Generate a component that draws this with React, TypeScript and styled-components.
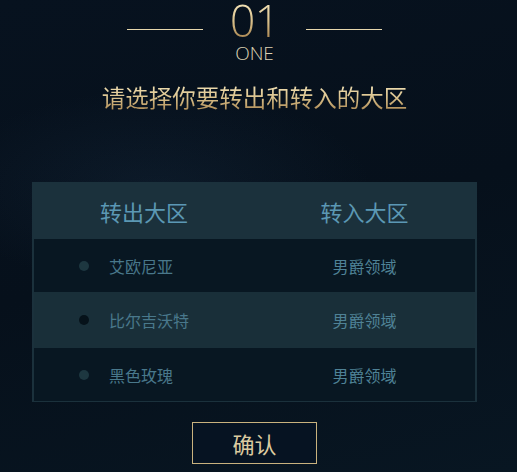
import React from 'react'
import styled, { createGlobalStyle } from 'styled-components'

const GlobalStyle = createGlobalStyle`
  html, body {
    margin: 0;
    padding: 0;
    background: #06101b;
  }
  body {
    font-family: "Noto Sans CJK SC", "Noto Sans", sans-serif;
  }
`

const rows = [
  { from: '艾欧尼亚', to: '男爵领域', active: false },
  { from: '比尔吉沃特', to: '男爵领域', active: true },
  { from: '黑色玫瑰', to: '男爵领域', active: false }
]

const App = () => {
  return (
    <>
      <GlobalStyle />
      <Page>
        <StepHeader>
          <Rule />
          <StepLabel>
            <StepNumber>01</StepNumber>
            <StepWord>ONE</StepWord>
          </StepLabel>
          <Rule />
        </StepHeader>
        <Title>请选择你要转出和转入的大区</Title>
        <Table>
          <HeadRow>
            <HeadCell>转出大区</HeadCell>
            <HeadCell>转入大区</HeadCell>
          </HeadRow>
          {rows.map((row) => (
            <Row key={row.from} $active={row.active}>
              <FromCell>
                <Dot $active={row.active} />
                <span>{row.from}</span>
              </FromCell>
              <ToCell>{row.to}</ToCell>
            </Row>
          ))}
        </Table>
        <ConfirmButton>确认</ConfirmButton>
      </Page>
    </>
  )
}

const Page = styled.div`
  width: 517px;
  height: 472px;
  box-sizing: border-box;
  padding-right: 8px;
  overflow: hidden;
  display: flex;
  flex-direction: column;
  align-items: center;
  background:
    radial-gradient(ellipse 60% 30% at 30% 40%, rgba(40, 70, 100, 0.18), transparent 70%),
    linear-gradient(165deg, #07121f 0%, #06101b 50%, #081622 100%);
`

const StepHeader = styled.div`
  display: flex;
  align-items: flex-start;
  gap: 20px;
`

const Rule = styled.div`
  width: 76px;
  height: 1px;
  margin-top: 29px;
  background: #e6d7ad;
`

const StepLabel = styled.div`
  display: flex;
  flex-direction: column;
  align-items: center;
  width: 63px;
`

const goldText = `
  background: linear-gradient(180deg, #f6e8bf 0%, #d9c08a 55%, #a98550 100%);
  -webkit-background-clip: text;
  background-clip: text;
  color: transparent;
`

const StepNumber = styled.div`
  font-family: "Open Sans", "Liberation Sans", sans-serif;
  font-weight: 300;
  font-size: 45px;
  line-height: 39px;
  letter-spacing: -1px;
  ${goldText}
`

const StepWord = styled.div`
  font-family: "Open Sans", "Liberation Sans", sans-serif;
  font-weight: 300;
  font-size: 19px;
  line-height: 29px;
  color: #ddd2b4;
`

const Title = styled.div`
  margin-top: 14px;
  font-size: 23.5px;
  line-height: 30px;
  font-weight: 400;
  ${goldText}
`

const Table = styled.div`
  margin-top: 70px;
  width: 445px;
  padding: 0 2px 1px;
  box-sizing: border-box;
  background: #1b313c;
  display: flex;
  flex-direction: column;
`

const HeadRow = styled.div`
  height: 57px;
  display: grid;
  grid-template-columns: 1fr 1fr;
  align-items: center;
`

const HeadCell = styled.div`
  font-size: 22px;
  color: #5b98b4;
  padding-left: 66px;
`

const Row = styled.div<{ $active: boolean }>`
  height: ${({ $active }) => ($active ? 56 : 53)}px;
  display: grid;
  grid-template-columns: 1fr 1fr;
  align-items: center;
  background: ${({ $active }) => ($active ? '#192f39' : '#081722')};
`

const FromCell = styled.div`
  display: flex;
  align-items: center;
  gap: 20px;
  padding-left: 45px;
  font-size: 16px;
  color: #49788b;
`

const Dot = styled.span<{ $active: boolean }>`
  width: 10px;
  height: 10px;
  border-radius: 50%;
  background: ${({ $active }) => ($active ? '#06121a' : '#1d3740')};
`

const ToCell = styled.div`
  padding-left: 78px;
  font-size: 16px;
  color: #4f8296;
`

const ConfirmButton = styled.button`
  margin-top: 20px;
  width: 125px;
  height: 42px;
  box-sizing: border-box;
  border: 1px solid #c9b27e;
  background: #061322;
  font-family: "Noto Sans CJK SC", sans-serif;
  font-size: 22px;
  color: #dccba0;
  cursor: pointer;
  padding: 0;
`

export default App
